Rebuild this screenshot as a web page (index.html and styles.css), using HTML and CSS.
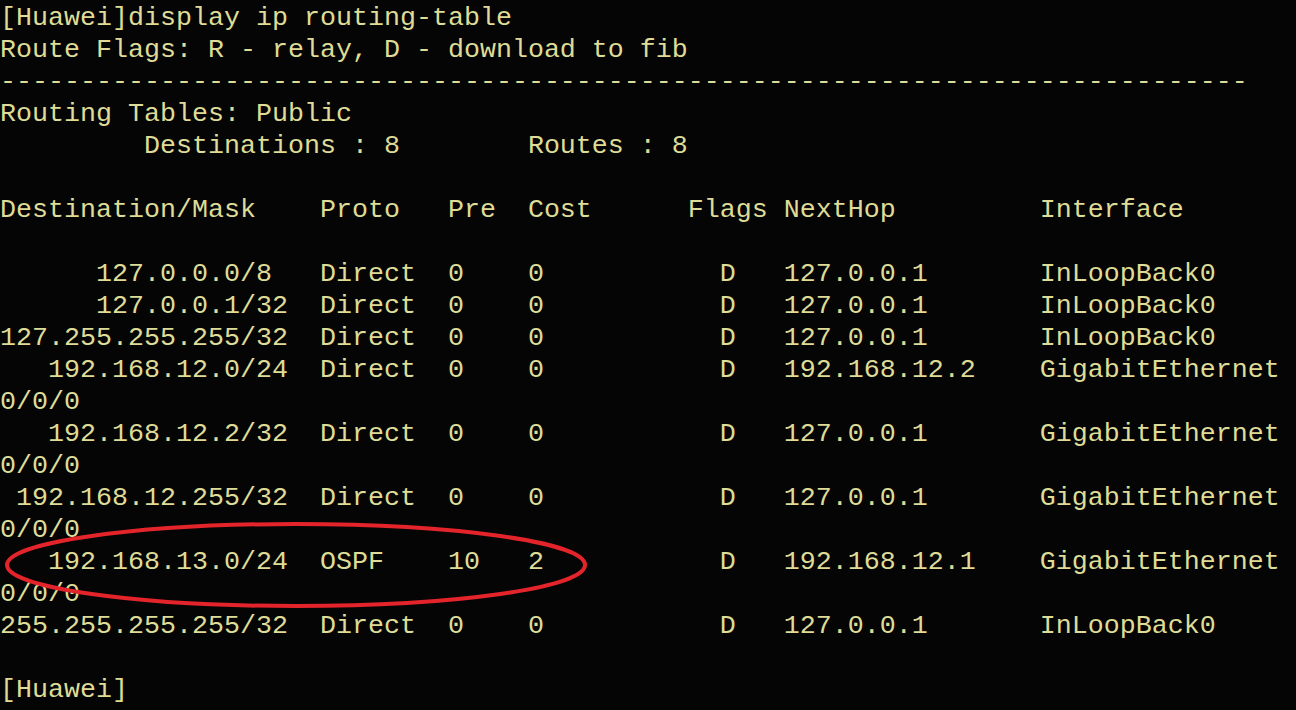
FILE: index.html
```html
<!DOCTYPE html>
<html lang="en">
<head>
<meta charset="utf-8">
<title>display ip routing-table</title>
<link rel="stylesheet" href="styles.css">
</head>
<body>
<div class="terminal">
<pre class="screen">[Huawei]display ip routing-table
Route Flags: R - relay, D - download to fib
------------------------------------------------------------------------------
Routing Tables: Public
         Destinations : 8        Routes : 8

Destination/Mask    Proto   Pre  Cost      Flags NextHop         Interface

      127.0.0.0/8   Direct  0    0           D   127.0.0.1       InLoopBack0
      127.0.0.1/32  Direct  0    0           D   127.0.0.1       InLoopBack0
127.255.255.255/32  Direct  0    0           D   127.0.0.1       InLoopBack0
   192.168.12.0/24  Direct  0    0           D   192.168.12.2    GigabitEthernet
0/0/0
   192.168.12.2/32  Direct  0    0           D   127.0.0.1       GigabitEthernet
0/0/0
 192.168.12.255/32  Direct  0    0           D   127.0.0.1       GigabitEthernet
0/0/0
   192.168.13.0/24  OSPF    10   2           D   192.168.12.1    GigabitEthernet
0/0/0
255.255.255.255/32  Direct  0    0           D   127.0.0.1       InLoopBack0

[Huawei]</pre>
<svg class="mark" width="600" height="110" viewBox="0 0 600 110" aria-hidden="true">
  <ellipse cx="296" cy="55" rx="289" ry="41" fill="none" stroke="#e3242a" stroke-width="4"/>
</svg>
</div>
</body>
</html>
```

FILE: styles.css
```css
html, body {
  margin: 0;
  padding: 0;
  background: #050505;
  height: 100%;
  overflow: hidden;
}

.terminal {
  position: relative;
  width: 1296px;
  height: 710px;
  background: #050505;
}

.screen {
  margin: 0;
  padding: 2px 0 0 0;
  font-family: "Liberation Mono", "DejaVu Sans Mono", monospace;
  font-size: 26.6667px;
  line-height: 32px;
  color: #dedc96;
  white-space: pre;
}

.mark {
  position: absolute;
  left: 0;
  top: 510px;
}
```
